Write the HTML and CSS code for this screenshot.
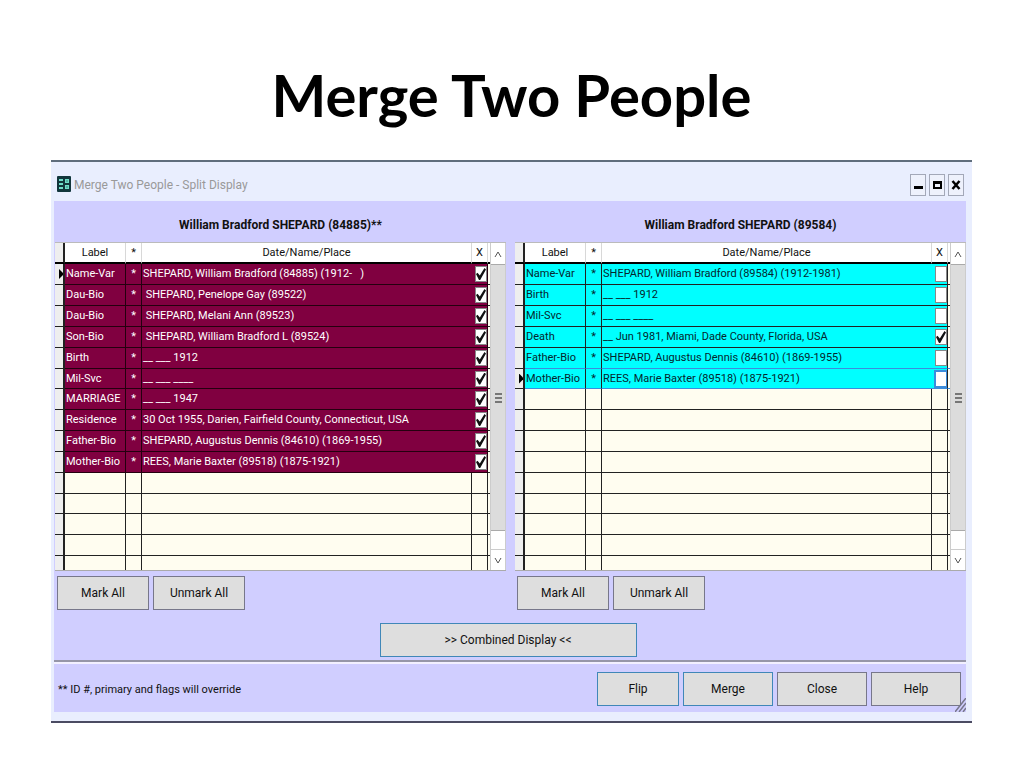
FILE: index.html
```
<!DOCTYPE html>
<html lang="en">
<head>
    <meta charset="UTF-8">
    <meta name="viewport" content="width=device-width, initial-scale=1.0">
    <title>Merge Two People</title>
    <link rel="stylesheet" href="styles.css">
</head>
<body>
    <h1>Merge Two People</h1>

    <main class="window">
        <header class="titlebar">
            <svg class="app-icon" width="14" height="16" viewBox="0 0 14 16" aria-hidden="true">
                <rect width="14" height="16" rx="1" fill="#12363c"/>
                <path d="M2 3h4v2H2zM2 7h4v2H2zM2 11h4v2H2zM8 3h4v4H8zM8 9h4v4H8z" fill="#6fdcc8"/>
                <path d="M9.500 4.500h1v1h-1zM9.500 10.500h1v1h-1z" fill="#12363c"/>
            </svg>
            <span class="caption">Merge Two People - Split Display</span>
            <button class="win-btn" aria-label="Minimize"><svg width="14" height="20" viewBox="0 0 14 20"><path d="M3 11h9v3H3z"/></svg></button>
            <button class="win-btn" aria-label="Maximize"><svg width="14" height="20" viewBox="0 0 14 20"><path d="M3 6h9v8H3zM5 9v3h5V9z" fill-rule="evenodd"/></svg></button>
            <button class="win-btn" aria-label="Close window"><svg width="14" height="20" viewBox="0 0 14 20"><path d="M3.500 6l7 8M10.500 6l-7 8" stroke="#000" stroke-width="2.500"/></svg></button>
        </header>

        <div class="content">
            <div class="panels">
                <section class="panel">
                    <h2>William Bradford SHEPARD (84885)**</h2>
                    <div class="grid-box">
                        <table class="grid maroon">
                            <thead>
                                <tr><th class="gutter"></th><th class="label">Label</th><th class="star">*</th><th>Date/Name/Place</th><th class="mark">X</th><th class="edge"></th></tr>
                            </thead>
                            <tbody>
                                <tr class="data current"><td></td><td>Name-Var</td><td>*</td><td>SHEPARD, William Bradford (84885) (1912-&nbsp;&nbsp; )</td><td><input type="checkbox" aria-label="Name-Var" checked></td><td></td></tr>
                                <tr class="data"><td></td><td>Dau-Bio</td><td>*</td><td>&nbsp;SHEPARD, Penelope Gay (89522)</td><td><input type="checkbox" aria-label="Penelope Gay" checked></td><td></td></tr>
                                <tr class="data"><td></td><td>Dau-Bio</td><td>*</td><td>&nbsp;SHEPARD, Melani Ann (89523)</td><td><input type="checkbox" aria-label="Melani Ann" checked></td><td></td></tr>
                                <tr class="data"><td></td><td>Son-Bio</td><td>*</td><td>&nbsp;SHEPARD, William Bradford L (89524)</td><td><input type="checkbox" aria-label="William Bradford L" checked></td><td></td></tr>
                                <tr class="data"><td></td><td>Birth</td><td>*</td><td>__ ___ 1912</td><td><input type="checkbox" aria-label="Birth" checked></td><td></td></tr>
                                <tr class="data"><td></td><td>Mil-Svc</td><td>*</td><td>__ ___ ____</td><td><input type="checkbox" aria-label="Mil-Svc" checked></td><td></td></tr>
                                <tr class="data"><td></td><td>MARRIAGE</td><td>*</td><td>__ ___ 1947</td><td><input type="checkbox" aria-label="Marriage" checked></td><td></td></tr>
                                <tr class="data"><td></td><td>Residence</td><td>*</td><td>30 Oct 1955, Darien, Fairfield County, Connecticut, USA</td><td><input type="checkbox" aria-label="Residence" checked></td><td></td></tr>
                                <tr class="data"><td></td><td>Father-Bio</td><td>*</td><td>SHEPARD, Augustus Dennis (84610) (1869-1955)</td><td><input type="checkbox" aria-label="Father-Bio" checked></td><td></td></tr>
                                <tr class="data"><td></td><td>Mother-Bio</td><td>*</td><td>REES, Marie Baxter (89518) (1875-1921)</td><td><input type="checkbox" aria-label="Mother-Bio" checked></td><td></td></tr>
                                <tr><td></td><td></td><td></td><td></td><td></td><td></td></tr>
                                <tr><td></td><td></td><td></td><td></td><td></td><td></td></tr>
                                <tr><td></td><td></td><td></td><td></td><td></td><td></td></tr>
                                <tr><td></td><td></td><td></td><td></td><td></td><td></td></tr>
                                <tr><td></td><td></td><td></td><td></td><td></td><td></td></tr>
                            </tbody>
                        </table>
                        <div class="scrollbar">
                            <button aria-label="Scroll up"><svg width="8" height="8" viewBox="0 0 8 8"><path d="M1 7l3-5 3 5"/></svg></button>
                            <div class="thumb"><span></span><span></span><span></span></div>
                            <button aria-label="Scroll down"><svg width="8" height="8" viewBox="0 0 8 8"><path d="M1 1l3 5 3-5"/></svg></button>
                        </div>
                    </div>
                    <div class="mark-buttons">
                        <button class="btn large">Mark All</button>
                        <button class="btn large">Unmark All</button>
                    </div>
                </section>

                <section class="panel">
                    <h2>William Bradford SHEPARD (89584)</h2>
                    <div class="grid-box">
                        <table class="grid cyan">
                            <thead>
                                <tr><th class="gutter"></th><th class="label">Label</th><th class="star">*</th><th>Date/Name/Place</th><th class="mark">X</th><th class="edge"></th></tr>
                            </thead>
                            <tbody>
                                <tr class="data"><td></td><td>Name-Var</td><td>*</td><td>SHEPARD, William Bradford (89584) (1912-1981)</td><td><input type="checkbox" aria-label="Name-Var"></td><td></td></tr>
                                <tr class="data"><td></td><td>Birth</td><td>*</td><td>__ ___ 1912</td><td><input type="checkbox" aria-label="Birth"></td><td></td></tr>
                                <tr class="data"><td></td><td>Mil-Svc</td><td>*</td><td>__ ___ ____</td><td><input type="checkbox" aria-label="Mil-Svc"></td><td></td></tr>
                                <tr class="data"><td></td><td>Death</td><td>*</td><td>__ Jun 1981, Miami, Dade County, Florida, USA</td><td><input type="checkbox" aria-label="Death" checked></td><td></td></tr>
                                <tr class="data before-focus"><td></td><td>Father-Bio</td><td>*</td><td>SHEPARD, Augustus Dennis (84610) (1869-1955)</td><td><input type="checkbox" aria-label="Father-Bio"></td><td></td></tr>
                                <tr class="data current focus"><td></td><td>Mother-Bio</td><td>*</td><td>REES, Marie Baxter (89518) (1875-1921)</td><td><input type="checkbox" aria-label="Mother-Bio"></td><td></td></tr>
                                <tr><td></td><td></td><td></td><td></td><td></td><td></td></tr>
                                <tr><td></td><td></td><td></td><td></td><td></td><td></td></tr>
                                <tr><td></td><td></td><td></td><td></td><td></td><td></td></tr>
                                <tr><td></td><td></td><td></td><td></td><td></td><td></td></tr>
                                <tr><td></td><td></td><td></td><td></td><td></td><td></td></tr>
                                <tr><td></td><td></td><td></td><td></td><td></td><td></td></tr>
                                <tr><td></td><td></td><td></td><td></td><td></td><td></td></tr>
                                <tr><td></td><td></td><td></td><td></td><td></td><td></td></tr>
                                <tr><td></td><td></td><td></td><td></td><td></td><td></td></tr>
                            </tbody>
                        </table>
                        <div class="scrollbar">
                            <button aria-label="Scroll up"><svg width="8" height="8" viewBox="0 0 8 8"><path d="M1 7l3-5 3 5"/></svg></button>
                            <div class="thumb"><span></span><span></span><span></span></div>
                            <button aria-label="Scroll down"><svg width="8" height="8" viewBox="0 0 8 8"><path d="M1 1l3 5 3-5"/></svg></button>
                        </div>
                    </div>
                    <div class="mark-buttons">
                        <button class="btn large">Mark All</button>
                        <button class="btn large">Unmark All</button>
                    </div>
                </section>
            </div>

            <div class="combined">
                <button class="btn blue wide">&gt;&gt; Combined Display &lt;&lt;</button>
            </div>

            <footer class="footer">
                <p>** ID #, primary and flags will override</p>
                <button class="btn blue flip">Flip</button>
                <button class="btn blue">Merge</button>
                <button class="btn">Close</button>
                <button class="btn">Help</button>
                <svg class="grip" width="11" height="14" viewBox="0 0 11 14" aria-hidden="true"><path d="M0 14L11 0M4 14l7-9M8 14l3-4" stroke="#77778c" stroke-width="1.500" fill="none"/></svg>
            </footer>
        </div>
    </main>
</body>
</html>
```
FILE: styles.css
```
* {
    box-sizing: border-box;
}
body {
    margin: 0;
    padding: 0 52px 0 51px;
    background: #fff;
    font-family: "Roboto", sans-serif;
    font-size: 11px;
    color: #111;
}
h1 {
    margin: 0;
    padding: 59px 0 29px;
    font-family: "Lato", sans-serif;
    font-size: 58px;
    line-height: 72px;
    font-weight: bold;
    text-align: center;
    color: #000;
}
button {
    padding: 0;
    font-family: inherit;
    color: inherit;
}
.window {
    padding: 0 6px 9px 3px;
    border-top: 2px solid #5f6d7c;
    border-bottom: 2px solid #4b4b62;
    background: #e9eefe;
}
.titlebar {
    display: flex;
    align-items: center;
    gap: 3px;
    height: 39px;
    padding: 6px 2px 0 3px;
}
.app-icon {
    margin-top: -2px;
}
.caption {
    flex: 1;
    font-size: 12px;
    color: #999;
}
.win-btn {
    width: 16px;
    height: 22px;
    border: 1px solid #a3a8b8;
    background: #eef1fc;
    display: flex;
    align-items: center;
    justify-content: center;
}
.win-btn svg {
    flex: none;
}
.content {
    background: #d0ceff;
}
.panels {
    display: flex;
    gap: 9px;
    padding-left: 1px;
}
.panel {
    flex: 1;
    min-width: 0;
}
h2 {
    margin: 0;
    padding: 14px 0 7px;
    font-size: 12px;
    line-height: 20px;
    font-weight: bold;
    text-align: center;
}
.grid-box {
    display: flex;
    border-top: 1px solid #bbb;
    border-bottom: 1px solid #aaa;
    background: #fffdf0;
}
.grid {
    flex: 1;
    width: 100%;
    table-layout: fixed;
    border-collapse: separate;
    border-spacing: 0;
}
.grid th {
    height: 21px;
    padding: 0;
    border-right: 1px solid #d8d8d8;
    border-bottom: 2px solid #000;
    background: #fff;
    font-weight: normal;
}
.grid .gutter {
    width: 10px;
    border-right: 2px solid #222;
    background: #eee;
}
.grid .label {
    width: 61px;
}
.grid .star {
    width: 16px;
}
.grid .mark {
    width: 16px;
}
.grid .edge {
    width: 2px;
    border-right: 0;
}
.grid tbody tr {
    height: 21px;
}
.grid tbody tr:nth-child(6n) {
    height: 20px;
}
.grid tbody tr:last-child {
    height: 14px;
}
.grid td {
    padding: 0 1px;
    border-right: 1px solid #222;
    border-bottom: 1px solid #222;
    line-height: 16px;
    white-space: nowrap;
    overflow: hidden;
}
.grid td:first-child {
    padding: 0;
    border-right: 2px solid #222;
    background: #eee;
}
.grid td:nth-child(3) {
    text-align: center;
}
.grid td:nth-child(5) {
    padding: 0;
    text-align: right;
}
.grid td:last-child {
    padding: 0;
    border-right: 0;
}
.grid tr:last-child td {
    border-bottom: 0;
}
.maroon .data td:nth-child(n+2):nth-child(-n+5) {
    background: #800040;
    border-color: #24000f;
    color: #fff;
}
.cyan .data td:nth-child(n+2):nth-child(-n+5) {
    background: #00ffff;
    color: #06262e;
}
.grid .data td:nth-child(4) {
    border-right: 0;
}
.cyan .before-focus td:nth-child(n+2),
.cyan .focus td:nth-child(n+2) {
    border-bottom-color: #3c8cdc;
}
.grid .current td:first-child::before {
    content: "";
    display: block;
    width: 5px;
    height: 10px;
    margin-left: 4px;
    background: #000;
    clip-path: polygon(0 0, 100% 50%, 0 100%);
}
.grid input {
    appearance: none;
    display: block;
    width: 12px;
    height: 16px;
    margin: 0 0 0 auto;
    border: 1px solid #888;
    background: #fff;
}
.grid input:checked::before {
    content: "";
    display: block;
    width: 10px;
    height: 12px;
    margin-top: 1px;
    background: #111;
    clip-path: polygon(0 50%, 15% 40%, 38% 62%, 85% 0, 100% 12%, 42% 100%, 30% 100%);
}
.focus input {
    outline: 2px solid #3c8cdc;
    outline-offset: -1px;
}
.scrollbar {
    flex: none;
    display: flex;
    flex-direction: column;
    width: 16px;
    border-left: 1px solid #ccc;
    border-right: 1px solid #ccc;
    background: #fff;
}
.scrollbar button {
    height: 21px;
    border: 0;
    border-top: 1px solid #ccc;
    background: #fff;
}
.scrollbar button:first-child {
    border-top: 0;
}
.scrollbar path {
    fill: none;
    stroke: #555;
    stroke-width: 1;
}
.thumb {
    flex: 1;
    display: flex;
    flex-direction: column;
    align-items: center;
    justify-content: center;
    gap: 2px;
    margin-bottom: 18px;
    border-top: 1px solid #aaa;
    border-bottom: 1px solid #aaa;
    background: #dcdcdc;
}
.thumb span {
    width: 7px;
    height: 2px;
    background: #777;
}
.mark-buttons {
    display: flex;
    gap: 4px;
    padding: 5px 2px 0;
}
.btn {
    width: 90px;
    height: 34px;
    border: 1px solid #77778a;
    background: #dedede;
    font-size: 12px;
}
.large {
    width: 92px;
}
.blue {
    border-color: #4087b8;
}
.wide {
    width: 257px;
}
.flip {
    width: 82px;
}
.combined {
    display: flex;
    justify-content: center;
    padding: 13px 4px 3px 0;
    border-bottom: 2px solid #9696a8;
}
.footer {
    position: relative;
    display: flex;
    align-items: center;
    gap: 4px;
    padding: 8px 5px 6px 4px;
    border-top: 2px solid #f2f0ff;
}
.footer p {
    flex: 1;
    margin: 0;
}
.grip {
    position: absolute;
    right: 0;
    bottom: 0;
}
```
